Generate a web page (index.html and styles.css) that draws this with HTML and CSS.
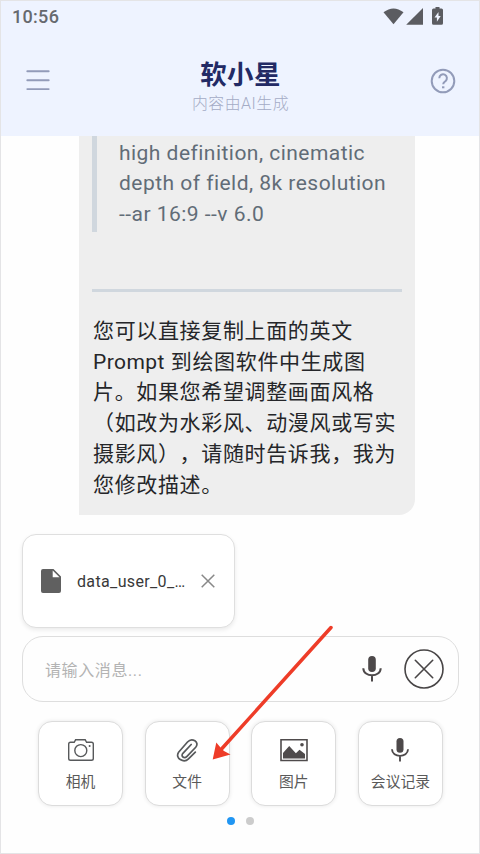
FILE: index.html
```html
<!DOCTYPE html>
<html lang="zh-CN">
<head>
<meta charset="utf-8">
<title>软小星</title>
<link rel="stylesheet" href="styles.css">
</head>
<body>
<div class="screen">
  <header class="top">
    <div class="status">
      <span class="time">10:56</span>
      <svg class="status-icons" width="64" height="20" viewBox="0 0 64 20" fill="#5b5c61">
        <path d="M1.500 5.300Q11.500-2.500 21.500 5.300L11.500 17.200Z"/>
        <path d="M41 1V17.700H24.200Z"/>
        <path fill-rule="evenodd" d="M53.500 0h4v1.500h2q1.500 0 1.500 1.500v13.200q0 1.500-1.500 1.500h-8q-1.500 0-1.500-1.500V3q0-1.500 1.500-1.500h2ZM56.500 5l-4 5.600h2.400V14.800l3.800-5.800h-2.200Z"/>
      </svg>
    </div>
    <div class="bar">
      <svg class="menu" width="24" height="24" viewBox="0 0 24 24" stroke="#929bb9" stroke-width="1.900" stroke-linecap="round"><path d="M1.300 3.300H22.700M1.300 12.200H22.700M1.300 21.100H22.700"/></svg>
      <div class="heading">
        <h1>软小星</h1>
        <p>内容由AI生成</p>
      </div>
      <svg class="help" width="26" height="26" viewBox="0 0 26 26" fill="none" stroke="#929bb9" stroke-width="2"><circle cx="13" cy="13" r="11.300"/><path d="M9.300 10.200a3.800 3.800 0 1 1 6.200 2.900C14 14.200 13.200 14.700 13.200 16.300"/><path d="M12 19.300h2.400"/></svg>
    </div>
  </header>
  <main class="chat">
    <article class="bubble">
      <blockquote>high definition, cinematic<br>depth of field, 8k resolution<br>--ar 16:9 --v 6.0</blockquote>
      <hr>
      <p>您可以直接复制上面的英文<br><span class="latin">Prompt</span> 到绘图软件中生成图<br>片。如果您希望调整画面风格<br>（如改为水彩风、动漫风或写实<br>摄影风），请随时告诉我，我为<br>您修改描述。</p>
    </article>
  </main>
  <section class="composer">
    <div class="file">
      <svg width="20" height="24" viewBox="0 0 20 24"><path fill="#606060" d="M2 0H12.500L20 7.500V22q0 2-2 2H2q-2 0-2-2V2Q0 0 2 0ZM11.700 1.500V8.200H18.500Z" fill-rule="evenodd"/></svg>
      <span class="name">data_user_0_…</span>
      <svg width="14" height="14" viewBox="0 0 14 14" stroke="#888" stroke-width="1.500"><path d="M.7.700 13.300 13.300M13.300.700.700 13.300"/></svg>
    </div>
    <div class="input">
      <span class="placeholder">请输入消息...</span>
      <svg class="mic" width="20" height="26" viewBox="0 0 20 26"><rect x="6.200" y="0" width="7.600" height="16" rx="3.800" fill="#4d494a"/><path d="M1.300 12.200C1.500 21.700 18.500 21.700 18.700 12.200M10 19.500V25.500" fill="none" stroke="#4d494a" stroke-width="2"/></svg>
      <svg class="cancel" width="40" height="40" viewBox="0 0 40 40" fill="none" stroke="#484546" stroke-width="1.600" stroke-linecap="round"><circle cx="20" cy="20" r="19"/><path d="M11.300 11.300 28.700 28.700M28.700 11.300 11.300 28.700"/></svg>
    </div>
    <div class="tools">
      <div class="tool">
        <svg width="28" height="24" viewBox="0 0 28 24" fill="none" stroke="#57595b" stroke-width="1.400"><path d="M3.500 4.300H7.200L8.600 1.800H18.200L19.600 4.300H24.500q1.800 0 1.800 1.800V20.400q0 1.800-1.800 1.800H3.500q-1.800 0-1.800-1.800V6.100q0-1.800 1.800-1.800Z"/><circle cx="13.800" cy="12.600" r="6"/><circle cx="22.600" cy="8" r="1" fill="#57595b" stroke="none"/></svg>
        <span>相机</span>
      </div>
      <div class="tool">
        <svg width="28" height="24" viewBox="0 0 28 24" fill="none" stroke="#57595b" stroke-width="1.700" stroke-linecap="round"><path d="M22.300 14.200 15.500 20.900C10.700 25.600 1.600 20.200 5.600 14.200L14.500 4C19-1 27 4 22.700 9.300L14 18.300C11.100 21.300 7.400 18.200 9.900 15.300L18.200 6.500"/></svg>
        <span>文件</span>
      </div>
      <div class="tool">
        <svg width="28" height="24" viewBox="0 0 28 24"><path d="M1 1.700H27V22.500H1Z" fill="none" stroke="#4f4b4c" stroke-width="1.600"/><path fill="#4f4b4c" d="M3 20.500V15L9.200 8l6.700 7.200 3.600-3.500L25 16V20.500Z"/><circle cx="22" cy="6.700" r="1.800" fill="#4f4b4c"/></svg>
        <span>图片</span>
      </div>
      <div class="tool">
        <svg width="20" height="24" viewBox="0 0 20 26"><rect x="6.200" y="0" width="7.600" height="16" rx="3.800" fill="#4d494a"/><path d="M1.300 12.200C1.500 21.700 18.500 21.700 18.700 12.200M10 19.500V25.500" fill="none" stroke="#4d494a" stroke-width="2"/></svg>
        <span>会议记录</span>
      </div>
    </div>
    <div class="dots"><i class="active"></i><i></i></div>
  </section>
  <svg class="arrow" width="124" height="138" viewBox="0 0 124 138"><path d="M119 4.500 10 125.500" stroke="#ee3c28" stroke-width="3.500" stroke-linecap="round"/><path fill="#ee3c28" d="M.7 136.500 4.300 119.500 8.500 124.500 12 128 18.500 131.500Z"/></svg>
</div>
</body>
</html>
```

FILE: styles.css
```css
* { box-sizing: border-box; margin: 0; padding: 0; }
body {
  width: 480px;
  height: 854px;
  overflow: hidden;
  background: #fff;
  font-family: Roboto, "Noto Sans CJK SC", sans-serif;
  text-spacing-trim: space-all;
}
svg { display: block; flex-shrink: 0; }
.screen {
  position: relative;
  display: flex;
  flex-direction: column;
  height: 854px;
  border: 1px solid #e4e4e6;
  background: #fefefe;
}
.top { height: 135px; flex-shrink: 0; background: #eef3ff; }
.status {
  display: flex;
  justify-content: space-between;
  padding: 5px 33px 0 11px;
  height: 32px;
}
.status-icons { margin-top: 1px; }
.time {
  font-size: 18px;
  line-height: 21px;
  font-weight: 500;
  letter-spacing: .3px;
  color: #66696e;
}
.bar {
  display: flex;
  justify-content: space-between;
  padding: 0 23px 0 25px;
}
.menu { margin-top: 35px; }
.help { margin-top: 35px; }
.heading { text-align: center; padding: 23px 0 0 1px; }
h1 {
  font-size: 26.5px;
  line-height: 37px;
  font-weight: 700;
  letter-spacing: .3px;
  color: #222a65;
}
.heading p {
  font-size: 15.9px;
  line-height: 22px;
  letter-spacing: .5px;
  color: #a4abc5;
  font-weight: 300;
}
.chat { height: 379px; flex-shrink: 0; padding-left: 78px; }
.bubble {
  width: 336px;
  height: 379px;
  padding: 0 13px;
  border-radius: 0 0 16px 0;
  background: #eee;
  font-size: 21px;
  line-height: 30.7px;
  letter-spacing: .65px;
  color: #252629;
  white-space: nowrap;
}
.bubble p { padding-left: 1px; }
blockquote {
  height: 96px;
  padding: 1.500px 0 0 22px;
  border-left: 5px solid #d0d7de;
  letter-spacing: .47px;
  color: #616c77;
}
.latin { letter-spacing: .45px; }
hr {
  height: 3px;
  margin: 57px 0 24px;
  border: 0;
  background: #d0d7de;
}
.composer { padding: 19px 20px 0 21px; }
.file {
  display: flex;
  align-items: center;
  width: 213px;
  height: 94px;
  padding: 0 19px 0 18px;
  border: 1px solid #dfdfdf;
  border-radius: 14px;
  background: #fff;
  box-shadow: 0 2px 4px rgba(0, 0, 0, .08);
}
.name {
  flex: 1;
  margin-left: 16px;
  font-size: 16px;
  letter-spacing: .35px;
  color: #393939;
  white-space: nowrap;
}
.input {
  display: flex;
  align-items: center;
  height: 66px;
  margin-top: 8px;
  padding: 0 14px 0 22px;
  border: 1px solid #dedede;
  border-radius: 21px;
}
.placeholder {
  flex: 1;
  font-size: 16px;
  letter-spacing: .6px;
  color: #b3b3b3;
}
.cancel { margin-left: 22px; }
.tools {
  display: flex;
  justify-content: space-between;
  margin-top: 19px;
  padding: 0 16px;
}
.tool {
  display: flex;
  flex-direction: column;
  align-items: center;
  width: 85px;
  height: 85px;
  padding-top: 16px;
  border: 1px solid #dcdcdc;
  border-radius: 14px;
  background: #fff;
  box-shadow: 0 0 4px rgba(0, 0, 0, .09);
}
.tool span {
  margin-top: 9px;
  font-size: 14.8px;
  line-height: 22px;
  white-space: nowrap;
  color: #5a5a5a;
}
.dots {
  display: flex;
  justify-content: center;
  gap: 11px;
  margin-top: 11px;
}
.dots i {
  width: 8px;
  height: 8px;
  border-radius: 50%;
  background: #ccc;
}
.dots .active { background: #2196f3; }
.arrow { position: absolute; left: 211px; top: 622px; }
```
